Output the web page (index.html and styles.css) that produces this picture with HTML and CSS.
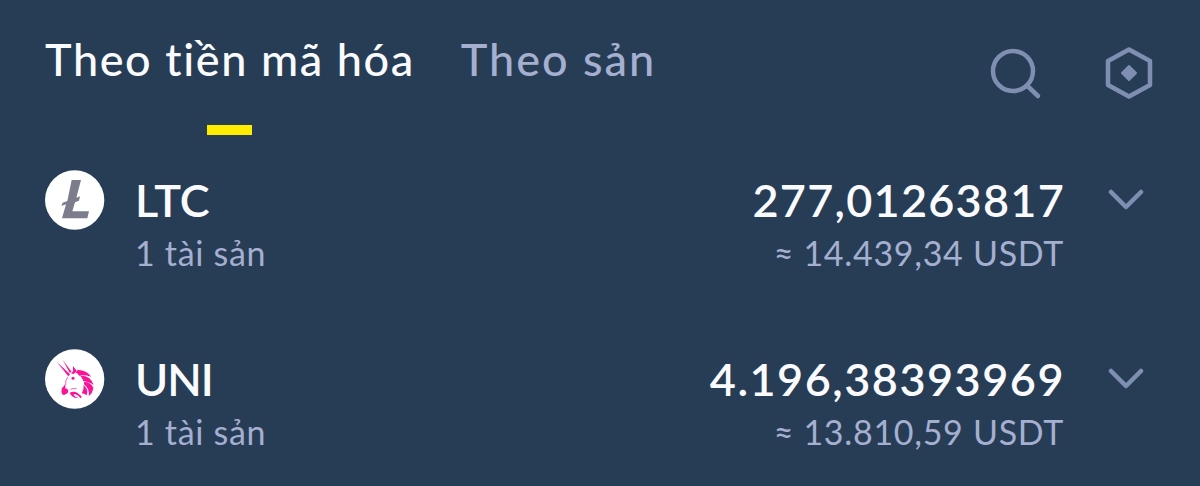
FILE: index.html
```
<!DOCTYPE html>
<html lang="vi">
  <head>
    <meta charset="UTF-8" />
    <meta name="viewport" content="width=device-width, initial-scale=1.0" />
    <title>Tài sản</title>
    <link rel="stylesheet" href="styles.css">
  </head>
  <body>
    <main class="wallet">
      <header class="toolbar">
        <nav class="tabs">
          <a class="tab tab--active">Theo tiền mã hóa</a>
          <a class="tab tab--product">Theo sản</a>
        </nav>
        <div class="actions">
          <svg class="icon" viewBox="0 0 54 54">
            <circle cx="25" cy="25" r="20" />
            <path d="M40 40.5L50 50" />
          </svg>
          <svg class="icon" viewBox="0 0 54 54">
            <path d="M28 3.5L49 15V39L28 50.5L7 39V15Z" />
            <path class="icon__dot" d="M28 20L35 27L28 34L21 27Z" />
          </svg>
        </div>
      </header>

      <section class="assets">
        <article class="asset">
          <svg class="asset__logo" viewBox="0 0 180 180">
            <circle cx="89" cy="90" r="89" fill="#fff" />
            <path fill="#7b7d8c" d="M80 30H108L94 83L105 79L102 92L90 97L82 124H132L127 145H51L63 103L49 108L53 98L67 93Z" />
          </svg>
          <div class="asset__info">
            <h3 class="asset__name">LTC</h3>
            <p class="asset__note">1 tài sản</p>
          </div>
          <div class="asset__balance">
            <p class="asset__amount asset__amount--ltc">277,01263817</p>
            <p class="asset__value">≈ 14.439,34 USDT</p>
          </div>
          <svg class="asset__arrow" viewBox="0 0 36 22">
            <path d="M3 3L18 18L33 3" />
          </svg>
        </article>

        <article class="asset">
          <svg class="asset__logo" viewBox="0 0 180 180">
            <circle cx="89" cy="90" r="89" fill="#fff" />
            <g fill="#fa1396">
              <path d="M35 38L75 76L70 82Z" />
              <path d="M53 32L80 69L74 71Z" />
              <path d="M84 51L96 67L86 75L78 73L84 67Z" />
              <path d="M97 62Q127 64 138 83Q119 77 103 80Q98 74 92 70Q98 68 97 62Z" />
              <path d="M106 80Q137 79 146 108Q129 97 115 97Q113 89 106 80Z" />
              <path d="M117 99Q138 99 145 116Q143 133 131 141Q135 121 117 106Z" />
              <path d="M115 108Q132 121 125 139Q119 135 110 132Q118 121 115 108Z" />
              <path d="M60 105Q58 113 51 117Q47 128 51 135Q57 140 61 136Q70 134 70 124Q67 119 61 118Q62 112 60 105Z" />
              <path d="M74 131Q93 123 105 139Q113 141 107 148Q93 131 85 137Q91 145 101 147Q82 149 74 131Z" />
              <circle cx="84" cy="88" r="4.5" />
            </g>
            <path class="asset__line" d="M69 84Q60 92 62 108M76 121Q84 117 95 119" />
          </svg>
          <div class="asset__info">
            <h3 class="asset__name asset__name--uni">UNI</h3>
            <p class="asset__note">1 tài sản</p>
          </div>
          <div class="asset__balance">
            <p class="asset__amount">4.196,38393969</p>
            <p class="asset__value">≈ 13.810,59 USDT</p>
          </div>
          <svg class="asset__arrow" viewBox="0 0 36 22">
            <path d="M3 3L18 18L33 3" />
          </svg>
        </article>
      </section>
    </main>
  </body>
</html>
```
FILE: styles.css
```
* {
  margin: 0;
  padding: 0;
  box-sizing: border-box;
}

body {
  font-family: Lato, 'Noto Sans', sans-serif;
  color: #fafbff;
  background-color: #273d55;
}

.wallet {
  height: 486px;
  padding: 33px 45px 0;
  overflow: hidden;
}

.toolbar {
  display: flex;
  justify-content: space-between;
  height: 137px;
}

.tabs {
  display: flex;
  gap: 46px;
}

.tab {
  display: flex;
  flex-direction: column;
  align-items: center;
  height: 102px;
  font-size: 45px;
  font-weight: 500;
  line-height: 52px;
  letter-spacing: 1.6px;
  white-space: nowrap;
  color: #a5afd0;
}

.tab--product {
  letter-spacing: 2px;
}

.tab--active {
  color: #fafbff;
}

.tab--active::after {
  content: '';
  width: 45px;
  height: 10px;
  margin-top: auto;
  background-color: #ffec00;
}

.actions {
  display: flex;
  gap: 59px;
  padding-top: 13px;
}

.icon {
  width: 54px;
  height: 54px;
  fill: none;
  stroke: #7f8fb2;
  stroke-width: 4.5;
  stroke-linecap: round;
  stroke-linejoin: round;
}

.icon__dot {
  fill: #7f8fb2;
  stroke-width: 2;
}

.asset {
  display: flex;
  height: 179px;
}

.asset__logo {
  width: 60px;
  height: 60px;
}

.asset__line {
  fill: none;
  stroke: #fa1396;
  stroke-width: 2;
}

.asset__info {
  margin-left: 30px;
}

.asset__name,
.asset__amount {
  font-size: 45px;
  font-weight: 600;
  line-height: 60px;
}

.asset__name--uni {
  letter-spacing: -1px;
}

.asset__note,
.asset__value {
  font-size: 34px;
  line-height: 46px;
  letter-spacing: 0.7px;
  color: #a5afd0;
}

.asset__balance {
  margin-left: auto;
  text-align: right;
}

.asset__amount {
  letter-spacing: 1.5px;
  margin-right: -1px;
}

.asset__amount--ltc {
  letter-spacing: 1.25px;
}

.asset__arrow {
  width: 36px;
  height: 22px;
  margin: 19px 11px 0 44px;
  fill: none;
  stroke: #7f8fb2;
  stroke-width: 4.5;
  stroke-linecap: round;
  stroke-linejoin: round;
}
```
